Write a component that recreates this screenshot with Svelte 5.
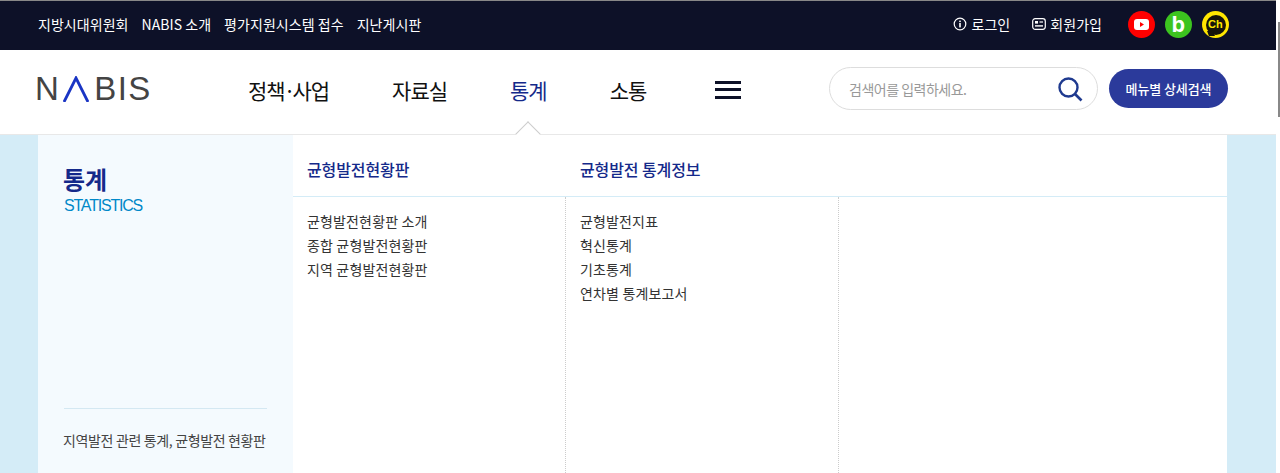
<script>
    const topLinks = ['지방시대위원회', 'NABIS 소개', '평가지원시스템 접수', '지난게시판'];
    const navItems = ['자료실', '통계', '소통'];
    const columns = [
        { title: '균형발전현황판', items: ['균형발전현황판 소개', '종합 균형발전현황판', '지역 균형발전현황판'] },
        { title: '균형발전 통계정보', items: ['균형발전지표', '혁신통계', '기초통계', '연차별 통계보고서'] },
        { title: '', items: [] }
    ];
</script>

<div class="page">
    <div class="main">
        <div class="topbar">
            <div class="top-links">
                {#each topLinks as link}
                    <a href="#top">{link}</a>
                {/each}
            </div>
            <div class="top-right">
                <a href="#top" class="user-link">
                    <svg width="14" height="14" viewBox="0 0 14 14" fill="none">
                        <circle cx="7" cy="7" r="5.8" stroke="#fff" stroke-width="1.2" />
                        <rect x="6.2" y="6" width="1.6" height="4.4" fill="#fff" />
                        <rect x="6.2" y="3.6" width="1.6" height="1.5" fill="#fff" />
                    </svg>
                    로그인
                </a>
                <a href="#top" class="user-link">
                    <svg width="14" height="12" viewBox="0 0 14 12" fill="none">
                        <rect x="0.7" y="0.7" width="12.6" height="10.6" rx="2.5" stroke="#fff" stroke-width="1.2" />
                        <rect x="3" y="3" width="3" height="2.6" fill="#fff" />
                        <rect x="3" y="7.2" width="8" height="1.4" fill="#fff" />
                        <rect x="7.5" y="3.4" width="3.5" height="1.2" fill="#fff" />
                    </svg>
                    회원가입
                </a>
                <div class="socials">
                    <span class="social youtube">
                        <svg width="15" height="11" viewBox="0 0 15 11">
                            <rect width="15" height="11" rx="3" fill="#fff" />
                            <path d="M6 3 L10 5.5 L6 8 Z" fill="#f00" />
                        </svg>
                    </span>
                    <span class="social blog">b</span>
                    <span class="social channel"><span class="bubble">Ch</span></span>
                </div>
            </div>
        </div>

        <header class="header">
            <div class="logo">
                <span>N</span>
                <svg width="26" height="26" viewBox="0 0 26 26" fill="none">
                    <path d="M1 26 L13 2 L25 26" stroke="#1a35c4" stroke-width="2.8" />
                </svg>
                <span>BIS</span>
            </div>
            <nav class="nav">
                <a href="#top">정책<span class="dot">·</span>사업</a>
                {#each navItems as item}
                    <a href="#top" class:active={item === '통계'}>{item}</a>
                {/each}
                <button class="hamburger" aria-label="전체메뉴">
                    <span></span><span></span><span></span>
                </button>
            </nav>
            <div class="search">
                <span class="placeholder">검색어를 입력하세요.</span>
                <svg width="26" height="26" viewBox="0 0 26 26" fill="none">
                    <circle cx="11.5" cy="11.5" r="9" stroke="#1f3a8f" stroke-width="2.4" />
                    <path d="M18 18 L24.5 24.5" stroke="#1f3a8f" stroke-width="2.6" />
                </svg>
            </div>
            <button class="detail-btn">메뉴별 상세검색</button>
        </header>

        <div class="panel">
            <div class="panel-inner">
                <aside class="side">
                    <h2>통계</h2>
                    <p class="eng">STATISTICS</p>
                    <p class="desc">지역발전 관련 통계, 균형발전 현황판</p>
                </aside>
                <div class="menu">
                    {#each columns as col}
                        <div class="col-head">{col.title}</div>
                    {/each}
                    {#each columns as col}
                        <ul class="col-list">
                            {#each col.items as item}
                                <li>{item}</li>
                            {/each}
                        </ul>
                    {/each}
                </div>
            </div>
        </div>
    </div>

    <div class="scrollbar">
        <span class="thumb"></span>
    </div>
</div>

<style>
    :global(body) {
        margin: 0;
        overflow: hidden;
        background: #fff;
    }

    .page {
        display: flex;
        height: 473px;
        overflow: hidden;
        font-family: "Noto Sans CJK KR", "Noto Sans", sans-serif;
    }

    .main {
        flex: 1;
        display: flex;
        flex-direction: column;
        min-width: 0;
    }

    a {
        color: inherit;
        text-decoration: none;
    }

    .topbar {
        height: 47px;
        flex-shrink: 0;
        display: flex;
        align-items: center;
        justify-content: space-between;
        padding: 0 47px 2px 38px;
        background: #0d1128;
        border-top: 1px solid #888;
        color: #fff;
        font-size: 14px;
        letter-spacing: 0.05px;
    }

    .top-links {
        display: flex;
        gap: 13px;
        padding-bottom: 2px;
    }

    .top-right {
        display: flex;
        align-items: center;
    }

    .user-link {
        display: flex;
        align-items: center;
        gap: 4px;
        margin-right: 22px;
        padding-bottom: 2px;
    }

    .socials {
        display: flex;
        gap: 10px;
        margin-left: 4px;
    }

    .social {
        position: relative;
        width: 27px;
        height: 27px;
        border-radius: 50%;
        display: flex;
        align-items: center;
        justify-content: center;
        box-sizing: border-box;
    }

    .youtube {
        background: #f00;
    }

    .blog {
        background: #3cc41f;
        color: #fff;
        font: 700 21px/1 "Inter", sans-serif;
    }

    .channel {
        background: #ffe600;
    }

    .bubble {
        width: 20px;
        height: 20px;
        border-radius: 50%;
        background: #16140a;
        color: #ffe600;
        font: 700 11px/19px "Liberation Sans", sans-serif;
        text-align: center;
    }

    /* tail of the speech bubble */
    .bubble::after {
        content: '';
        position: absolute;
        left: 6px;
        bottom: 2px;
        width: 6px;
        height: 5px;
        background: #16140a;
        transform: skewX(20deg);
    }

    .header {
        height: 85px;
        flex-shrink: 0;
        box-sizing: border-box;
        display: flex;
        align-items: center;
        padding: 0 48px 7px 35px;
        background: #fff;
        border-bottom: 1px solid #e8e8e8;
    }

    .logo {
        display: flex;
        align-items: flex-end;
        flex: 0 0 114px;
        min-width: 0;
        height: 26px;
        color: #444;
        font: 400 33px/26px "Liberation Sans", sans-serif;
        letter-spacing: 1.4px;
    }

    .logo span,
    .logo svg {
        flex-shrink: 0;
    }

    .logo svg {
        margin: 0 5px 0 3px;
    }

    .nav {
        display: flex;
        align-items: center;
        gap: 63px;
        margin: 2px 0 0 99px;
        font-size: 21px;
        font-weight: 400;
        letter-spacing: -1px;
        color: #111;
    }

    .nav .dot {
        letter-spacing: -3px;
        margin-left: -1px;
    }

    .nav a {
        position: relative;
    }

    .nav a.active {
        color: #14298a;
    }

    /* little notch pointing at the open menu */
    .nav a.active::after {
        content: '';
        position: absolute;
        left: 50%;
        top: 50px;
        width: 18px;
        height: 18px;
        margin-left: -9px;
        background: #fff;
        border-left: 1px solid #ccc;
        border-top: 1px solid #ccc;
        transform: rotate(45deg);
        box-sizing: border-box;
    }

    .hamburger {
        width: 26px;
        height: 18px;
        padding: 0;
        margin: 0 0 0 6px;
        border: 0;
        background: none;
        display: flex;
        flex-direction: column;
        justify-content: space-between;
    }

    .hamburger span {
        height: 3px;
        background: #0d1128;
    }

    .search {
        margin-left: auto;
        width: 269px;
        height: 43px;
        box-sizing: border-box;
        display: flex;
        align-items: center;
        justify-content: space-between;
        padding: 0 14px 0 19px;
        border: 1px solid #ddd;
        border-radius: 22px;
    }

    .placeholder {
        color: #999;
        font-size: 14px;
        letter-spacing: -0.5px;
    }

    .detail-btn {
        width: 119px;
        height: 39px;
        margin-left: 11px;
        padding: 0;
        border: 0;
        border-radius: 20px;
        background: #2b3a9b;
        color: #fff;
        font: 500 13px "Noto Sans CJK KR", sans-serif;
        letter-spacing: -0.1px;
    }

    .panel {
        flex: 1;
        min-height: 0;
        padding: 0 49px 0 38px;
        background: #d4ecf7;
    }

    .panel-inner {
        display: flex;
        height: 100%;
        background: #fff;
    }

    .side {
        width: 255px;
        flex-shrink: 0;
        box-sizing: border-box;
        display: flex;
        flex-direction: column;
        padding: 26px 26px 22px;
        background: #f4fafe;
    }

    .side h2 {
        margin: 0 0 0 -1px;
        color: #14298a;
        font-size: 24px;
        font-weight: 700;
        line-height: 35px;
        letter-spacing: 0;
    }

    .eng {
        margin: 0;
        color: #0088c8;
        font: 400 16px/20px "Liberation Sans", sans-serif;
        letter-spacing: -1.2px;
    }

    .desc {
        margin: auto 0 0;
        padding-top: 20px;
        border-top: 1px solid #d4e8f2;
        color: #444;
        font-size: 14px;
        line-height: 22px;
        letter-spacing: -0.35px;
        text-indent: -1px;
        white-space: nowrap;
    }

    .menu {
        flex: 1;
        display: grid;
        grid-template-columns: 273px 273px 1fr;
        grid-template-rows: 62px 1fr;
    }

    .col-head {
        box-sizing: border-box;
        padding: 21px 0 0 14px;
        border-bottom: 1px solid #d4ecf7;
        color: #14298a;
        font-size: 16px;
        font-weight: 500;
        line-height: 26px;
        letter-spacing: -0.1px;
    }

    .col-list {
        margin: 0;
        padding: 12px 0 0 14px;
        list-style: none;
        color: #333;
        font-size: 14px;
        line-height: 24px;
        letter-spacing: 0.15px;
    }

    .col-list:not(:last-child) {
        border-right: 1px dotted #ccc;
    }

    .scrollbar {
        width: 4px;
        flex-shrink: 0;
        display: flex;
        justify-content: flex-end;
        padding-top: 22px;
        box-sizing: border-box;
    }

    .thumb {
        width: 2px;
        height: 95px;
        background: #888;
    }
</style>
